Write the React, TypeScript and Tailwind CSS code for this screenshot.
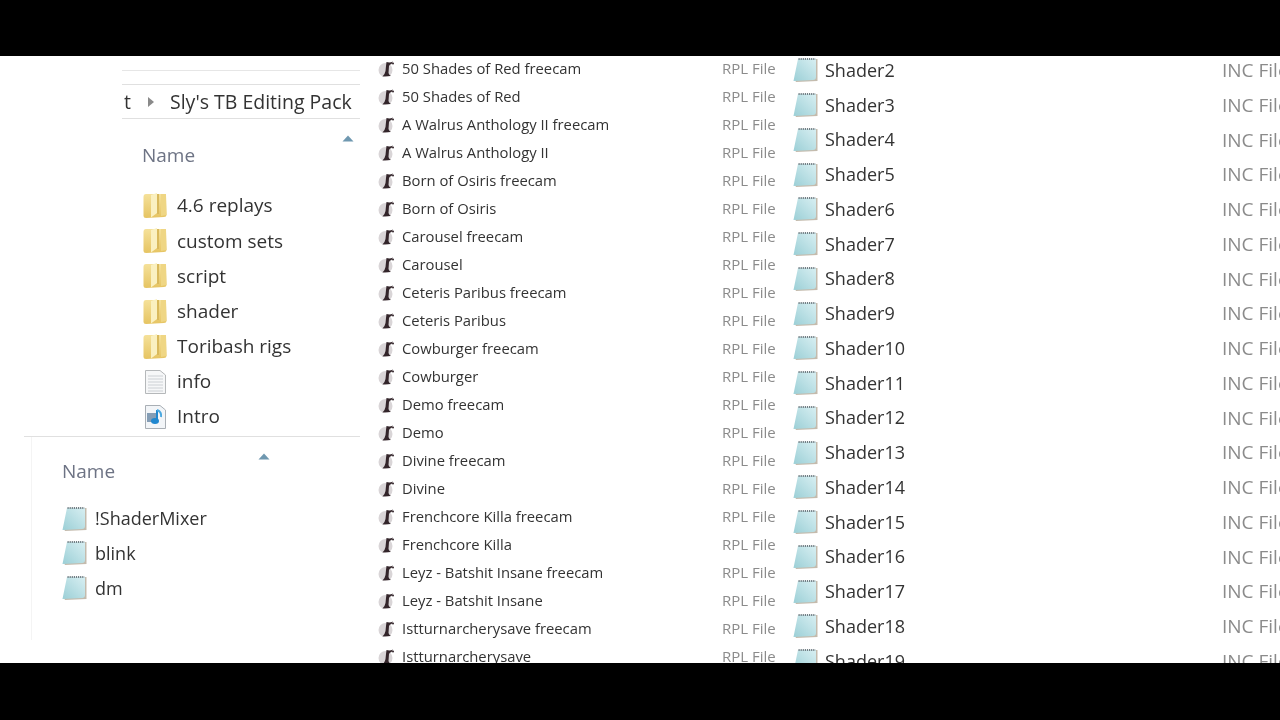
const replays = [
  "50 Shades of Red freecam",
  "50 Shades of Red",
  "A Walrus Anthology II freecam",
  "A Walrus Anthology II",
  "Born of Osiris freecam",
  "Born of Osiris",
  "Carousel freecam",
  "Carousel",
  "Ceteris Paribus freecam",
  "Ceteris Paribus",
  "Cowburger freecam",
  "Cowburger",
  "Demo freecam",
  "Demo",
  "Divine freecam",
  "Divine",
  "Frenchcore Killa freecam",
  "Frenchcore Killa",
  "Leyz - Batshit Insane freecam",
  "Leyz - Batshit Insane",
  "Istturnarcherysave freecam",
  "Istturnarcherysave",
];

const shaders = Array.from({ length: 18 }, (_, i) => `Shader${i + 2}`);
const folders = ["4.6 replays", "custom sets", "script", "shader", "Toribash rigs"];

function FolderIcon() {
  return (
    <svg width="24" height="27" viewBox="0 0 24 27" className="shrink-0">
      <defs>
        <linearGradient id="folderFill" x1="0" y1="0" x2="0" y2="1">
          <stop offset="0" stopColor="#f5e19a" />
          <stop offset="1" stopColor="#e6c462" />
        </linearGradient>
      </defs>
      <path d="M0.5 5 Q0.5 2 3 2 L20 2 Q23 2 23 5 L23.5 23 Q23.5 25 21 25 L3 26 Q0.5 26 0.5 24 Z" fill="url(#folderFill)" />
      <path d="M8 3 L14 1 L14 21 L8 25.5 Z" fill="#faf0c0" />
      <path d="M14 2 L16 2 L16 22 L14 22 Z" fill="#d9b95c" />
      <path d="M18 2 L23 2 L23.5 23 L18 24 Z" fill="#efd684" />
    </svg>
  );
}

function NotepadIcon() {
  return (
    <svg width="25" height="26" viewBox="0 0 25 26" className="shrink-0">
      <defs>
        <linearGradient id="padFill" x1="1" y1="0" x2="0" y2="1">
          <stop offset="0" stopColor="#d8eff2" />
          <stop offset="1" stopColor="#9bcfd6" />
        </linearGradient>
      </defs>
      <path d="M22 2 L24.5 2 L24.5 24 L3 25 L2 23 Z" fill="#b5aa98" opacity="0.8" />
      <path d="M5 2 L23 2 L23 20 Q23 23 20 23 L0.5 24 Q2.5 14 5 2 Z" fill="url(#padFill)" />
      <path d="M5.5 2 L22.5 2" stroke="#727f85" strokeWidth="2" strokeDasharray="1.2 0.9" />
    </svg>
  );
}

function ReplayIcon() {
  return (
    <svg width="18" height="20" viewBox="0 0 18 20" className="shrink-0">
      <circle cx="7.5" cy="11" r="7" fill="#d9d5d7" />
      <path d="M8.5 3 Q12 4 15 2.5 L13.5 5 Q11.5 5.5 11 7 L10.5 14 Q11 16 13 17 L4.5 17.5 Q7 15 7.5 12 L8 7 Z" fill="#33252a" />
      <circle cx="15" cy="4.5" r="1" fill="#33252a" />
    </svg>
  );
}

function TextFileIcon() {
  return (
    <svg width="24" height="26" viewBox="0 0 24 26" className="shrink-0">
      <path d="M2.5 1.5 H17 L22.5 6 V24.5 H2.5 Z" fill="#f6f7f8" stroke="#b5b8ba" />
      <path d="M5 7 H20 M5 10 H20 M5 13 H20 M5 16 H20 M5 19 H20 M5 22 H20" stroke="#ccd0d4" />
    </svg>
  );
}

function MediaFileIcon() {
  return (
    <svg width="24" height="26" viewBox="0 0 24 26" className="shrink-0">
      <path d="M2.5 1.5 H17 L22.5 6 V24.5 H2.5 Z" fill="#f2f5f8" stroke="#a9afb5" />
      <rect x="4" y="9" width="9" height="9" fill="#5f7f9f" opacity="0.75" />
      <path d="M14 6 V16" stroke="#1f87cf" strokeWidth="2" />
      <ellipse cx="12" cy="17" rx="4" ry="3" fill="#1f87cf" />
      <path d="M14 6 Q19 8 18 13" fill="none" stroke="#4aa8e0" strokeWidth="2" />
    </svg>
  );
}

function SortCaret() {
  return (
    <svg width="12" height="7" viewBox="0 0 12 7">
      <path d="M6 0.5 L11.5 6.5 L0.5 6.5 Z" fill="#6f98b0" />
    </svg>
  );
}

export default function App() {
  return (
    <div
      className="flex h-[720px] w-[1280px] flex-col overflow-hidden bg-black blur-[0.5px]"
      style={{ fontFamily: '"Open Sans", "Noto Sans", sans-serif' }}
    >
      <div className="h-14 shrink-0" />
      <div className="flex h-[607px] shrink-0 overflow-hidden bg-white">
        {/* left: two explorer windows stacked */}
        <div className="flex w-[360px] shrink-0 flex-col">
          <div className="ml-[122px] mt-3.5 border-t border-[#e6e6e6]" />
          <div className="ml-[122px] mt-[13px] flex h-[35px] items-center border-y border-[#e0e0e0] text-[19.5px] text-[#333]">
            <span className="w-[25px] pl-0.5">t</span>
            <svg width="8" height="10" viewBox="0 0 8 10">
              <path d="M1 0 L7 5 L1 10 Z" fill="#8a8a8a" />
            </svg>
            <span className="ml-[15px] whitespace-nowrap">Sly's TB Editing Pack</span>
          </div>

          <div className="ml-[142px] flex h-[69px] justify-between pr-1.5">
            <span className="mt-[23px] text-[19px] leading-[26px] text-[#6d7384]">Name</span>
            <span className="mt-4">
              <SortCaret />
            </span>
          </div>

          <div className="ml-[143px] flex flex-col text-[19px] text-[#333]">
            {folders.map((name) => (
              <div key={name} className="flex h-[35.2px] items-center gap-2.5">
                <FolderIcon />
                <span>{name}</span>
              </div>
            ))}
            <div className="flex h-[35.2px] items-center gap-2.5">
              <TextFileIcon />
              <span>info</span>
            </div>
            <div className="flex h-[35.2px] items-center gap-2.5">
              <MediaFileIcon />
              <span>Intro</span>
            </div>
          </div>

          <div className="ml-6 mt-0.5 flex-1 border-t border-[#e0e0e0]">
            <div className="ml-[7px] h-[203px] border-l border-[#f4f4f4] pl-[30px]">
              <div className="flex h-[64px] w-[208px] justify-between">
                <span className="mt-[21px] text-[19px] leading-[26px] text-[#6d7384]">Name</span>
                <span className="mt-4">
                  <SortCaret />
                </span>
              </div>
              <div className="flex flex-col">
                {["!ShaderMixer", "blink", "dm"].map((name) => (
                  <div key={name} className="flex h-[34.7px] items-center gap-2 text-[18px] text-[#333]">
                    <NotepadIcon />
                    <span>{name}</span>
                  </div>
                ))}
              </div>
            </div>
          </div>
        </div>

        {/* middle: replay list */}
        <div className="-mt-[1.5px] w-[430px] shrink-0 pl-[18px]">
          {replays.map((name) => (
            <div key={name} className="flex h-7 items-center">
              <ReplayIcon />
              <span className="ml-1.5 w-[320px] whitespace-nowrap text-[14.8px] text-[#333]">{name}</span>
              <span className="text-[15px] text-[#8b8b8b]">RPL File</span>
            </div>
          ))}
        </div>

        {/* right: shader list, cut off by the frame */}
        <div className="-mt-[3px] min-w-0 flex-1 overflow-hidden pl-[3px]">
          {shaders.map((name) => (
            <div key={name} className="flex h-[34.75px] items-center">
              <NotepadIcon />
              <span className="ml-[7px] w-[397px] shrink-0 whitespace-nowrap text-[18px] text-[#333]">{name}</span>
              <span className="shrink-0 whitespace-nowrap text-[19px] text-[#8b8b8b]">INC File</span>
            </div>
          ))}
        </div>
      </div>
    </div>
  );
}
